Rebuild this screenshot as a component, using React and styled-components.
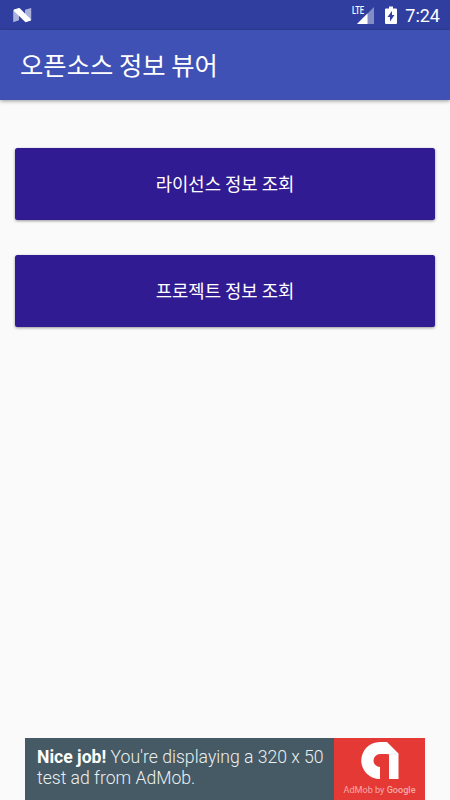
import React from 'react';
import styled, { createGlobalStyle } from 'styled-components';

const GlobalStyle = createGlobalStyle`
    * {
        box-sizing: border-box;
    }

    body {
        margin: 0;
        background: #fafafa;
        font-family: Roboto, "Noto Sans CJK KR", sans-serif;
    }
`;

const Screen = styled.div`
    display: flex;
    flex-direction: column;
    width: 450px;
    height: 800px;
    background: #fafafa;
    overflow: hidden;
`;

const StatusBar = styled.div`
    display: flex;
    justify-content: space-between;
    height: 30px;
    flex: none;
    background: #303f9f;
    color: #fff;
`;

const StatusIcons = styled.div`
    display: flex;
    align-items: center;
    gap: 9px;
    padding-right: 10px;
`;

const Clock = styled.span`
    margin-left: -1px;
    padding-top: 2px;
    font-size: 18px;
    line-height: 28px;
`;

const Toolbar = styled.header`
    display: flex;
    align-items: center;
    height: 70px;
    flex: none;
    padding: 0 0 2px 20px;
    background: #3f51b5;
    box-shadow: 0 1px 4px rgba(0, 0, 0, 0.4);
`;

const Title = styled.h1`
    margin: 0;
    color: #fff;
    font-family: "Noto Sans CJK KR", sans-serif;
    font-size: 25.35px;
    font-weight: 400;
    line-height: 36px;
`;

const Content = styled.main`
    display: flex;
    flex-direction: column;
    flex: 1;
    gap: 35px;
    padding: 47.7px 15px 0;
`;

const MenuButton = styled.button`
    height: 72.3px;
    padding: 0 0 2px;
    border: 0;
    border-radius: 2.5px;
    background: #311b92;
    color: #fff;
    font-family: "Noto Sans CJK KR", sans-serif;
    font-size: 17.75px;
    line-height: 26px;
    box-shadow: 0 1px 3px rgba(0, 0, 0, 0.4);
`;

const AdBanner = styled.aside`
    display: flex;
    width: 400px;
    height: 62px;
    flex: none;
    margin: 0 auto;
`;

const AdText = styled.div`
    width: 309px;
    padding: 9px 0 0 12px;
    background: #455a64;
    color: #eceff1;
    font-size: 17.6px;
    font-weight: 300;
    line-height: 21px;
    white-space: nowrap;

    b {
        color: #fff;
        font-weight: 700;
    }
`;

const AdBrand = styled.div`
    display: flex;
    flex-direction: column;
    align-items: center;
    width: 91px;
    padding-top: 4px;
    background: #e53935;
`;

const BrandName = styled.span`
    margin-top: 4px;
    color: #f5aaa8;
    font-size: 9.1px;
    line-height: 12px;
    white-space: nowrap;

    b {
        font-weight: 500;
    }
`;

const NougatIcon = () => (
    <svg width="34" height="30" viewBox="0 0 34 30">
        <path d="M13.2 10 19 8v12.3l-5.8 1.9zM25 9.8l6.200-1.800v12L25 22z" fill="#aab2dc" />
        <path d="M14 9.6 19.500 8 31 19.500v1L25.500 22.200 14 11z" fill="#fff" />
    </svg>
);

const SignalIcon = () => (
    <svg width="24" height="30" viewBox="0 0 24 30">
        <path d="M22 7v17H5z" fill="#838cc5" />
        <path d="M15.5 13.5V24H5z" fill="#fff" />
        <path d="M0 5h13v9.5H0z" fill="#303f9f" />
        <text x="0" y="14" fill="#fff" fontSize="10.5" fontWeight="500" textLength="12" lengthAdjust="spacingAndGlyphs">LTE</text>
    </svg>
);

const BatteryIcon = () => (
    <svg width="12" height="30" viewBox="0 0 12 30">
        <path d="M4 6.5h4v2h3q1 0 1 1V23q0 1-1 1H1q-1 0-1-1V9.5q0-1 1-1h3z" fill="#fff" />
        <path d="M7 11 2.5 17H5v4.5L9.5 15H7z" fill="#303f9f" />
    </svg>
);

const AdMobIcon = () => (
    <svg width="38" height="38" viewBox="0 0 38 38">
        <path d="M18.5 0H26l11.5 11.5V37H28V12h-9a6.5 6.5 0 0 0 0 13V37A18.5 18.5 0 0 1 18.5 0z" fill="#fff" />
        <path d="M26 12h11.5" stroke="#ddd" strokeWidth="0.6" />
    </svg>
);

const menus = ['라이선스 정보 조회', '프로젝트 정보 조회'];

const App = () => {
    return (
        <>
            <GlobalStyle />
            <Screen>
                <StatusBar>
                    <NougatIcon />
                    <StatusIcons>
                        <SignalIcon />
                        <BatteryIcon />
                        <Clock>7:24</Clock>
                    </StatusIcons>
                </StatusBar>
                <Toolbar>
                    <Title>오픈소스 정보 뷰어</Title>
                </Toolbar>
                <Content>
                    {menus.map(menu => (
                        <MenuButton key={menu} type="button">{menu}</MenuButton>
                    ))}
                </Content>
                <AdBanner>
                    <AdText>
                        <b>Nice job!</b> You're displaying a 320 x 50<br />
                        test ad from AdMob.
                    </AdText>
                    <AdBrand>
                        <AdMobIcon />
                        <BrandName>AdMob by <b>Google</b></BrandName>
                    </AdBrand>
                </AdBanner>
            </Screen>
        </>
    );
};

export default App;
